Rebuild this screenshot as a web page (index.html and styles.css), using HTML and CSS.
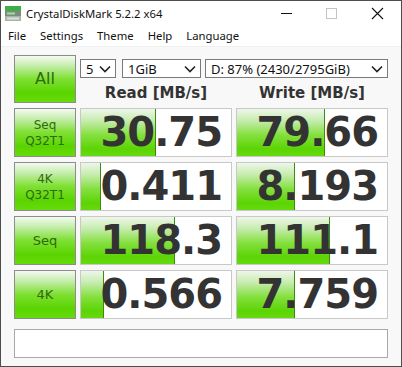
FILE: index.html
```html
<!DOCTYPE html>
<html>
<head>
    <meta charset="UTF-8">
    <title>CrystalDiskMark 5.2.2 x64</title>
    <link rel="stylesheet" href="styles.css">
</head>
<body>
    <div class="window">
        <div class="titlebar">
            <svg class="app-icon" width="16" height="15" viewBox="0 0 16 15">
                <rect x="0" y="0" width="16" height="5" fill="#3fae49"/>
                <rect x="0" y="5" width="16" height="5" fill="#7d8a80"/>
                <rect x="2" y="6.5" width="8" height="2" fill="#9fe0a0"/>
                <rect x="0" y="10" width="16" height="5" fill="#a9b3ab"/>
                <rect x="2" y="11.5" width="12" height="2" fill="#d8e6da"/>
            </svg>
            <span class="title">CrystalDiskMark 5.2.2 x64</span>
            <div class="controls">
                <svg width="46" height="24" viewBox="0 0 46 24"><line x1="18" y1="12.5" x2="29" y2="12.5" stroke="#111" stroke-width="1"/></svg>
                <svg width="46" height="24" viewBox="0 0 46 24"><rect x="17.5" y="7.5" width="10" height="10" fill="none" stroke="#c4c4c4" stroke-width="1"/></svg>
                <svg width="46" height="24" viewBox="0 0 46 24"><path d="M17 7 L28 18 M28 7 L17 18" stroke="#111" stroke-width="1.1"/></svg>
            </div>
        </div>
        <div class="menubar">
            <span>File</span>
            <span>Settings</span>
            <span>Theme</span>
            <span>Help</span>
            <span>Language</span>
        </div>

        <div class="client">
            <div class="bench">
                <div class="label-box all-button">All</div>
                <div class="top-right">
                    <div class="combo-row">
                        <div class="combo combo-count"><span>5</span><svg width="12" height="8" viewBox="0 0 12 8"><path d="M1 1.5 L6 6.5 L11 1.5" fill="none" stroke="#222" stroke-width="1.6"/></svg></div>
                        <div class="combo combo-size"><span>1GiB</span><svg width="12" height="8" viewBox="0 0 12 8"><path d="M1 1.5 L6 6.5 L11 1.5" fill="none" stroke="#222" stroke-width="1.6"/></svg></div>
                        <div class="combo combo-drive"><span>D: 87% (2430/2795GiB)</span><svg width="12" height="8" viewBox="0 0 12 8"><path d="M1 1.5 L6 6.5 L11 1.5" fill="none" stroke="#222" stroke-width="1.6"/></svg></div>
                    </div>
                    <div class="head-row">
                        <div class="col-head">Read [MB/s]</div>
                        <div class="col-head">Write [MB/s]</div>
                    </div>
                </div>

                <div class="label-box">Seq<br>Q32T1</div>
                <div class="value-box"><div class="bar" style="width: 74px"></div><span>30.75</span></div>
                <div class="value-box"><div class="bar" style="width: 87px"></div><span>79.66</span></div>

                <div class="label-box">4K<br>Q32T1</div>
                <div class="value-box"><div class="bar" style="width: 19px"></div><span>0.411</span></div>
                <div class="value-box"><div class="bar" style="width: 57px"></div><span>8.193</span></div>

                <div class="label-box label-single">Seq</div>
                <div class="value-box"><div class="bar" style="width: 93px"></div><span>118.3</span></div>
                <div class="value-box"><div class="bar" style="width: 92px"></div><span>111.1</span></div>

                <div class="label-box label-single">4K</div>
                <div class="value-box"><div class="bar" style="width: 22px"></div><span>0.566</span></div>
                <div class="value-box"><div class="bar" style="width: 57px"></div><span>7.759</span></div>
            </div>
            <div class="comment"></div>
        </div>
    </div>
</body>
</html>
```

FILE: styles.css
```css
body {
    margin: 0;
    font-family: "Noto Sans", "Open Sans", sans-serif;
    background-color: #fff;
    overflow: hidden;
}

.window {
    width: 402px;
    height: 367px;
    box-sizing: border-box;
    border: 1px solid #4d4d4d;
    background: #fff;
    display: flex;
    flex-direction: column;
}

.titlebar {
    height: 24px;
    display: flex;
    align-items: center;
    padding-left: 4px;
}

.app-icon {
    margin-top: 1px;
}

.title {
    margin-left: 5px;
    font-size: 11.3px;
    color: #111;
}

.controls {
    margin-left: auto;
    display: flex;
}

.menubar {
    height: 21px;
    display: flex;
    align-items: center;
    font-size: 11.3px;
    color: #111;
    padding-left: 7px;
    gap: 14px;
    border-bottom: 1px solid #f0f0f0;
}

.client {
    flex: 1;
    background: #f8f8f8;
    padding: 7px 0 0 13px;
}

.bench {
    display: grid;
    grid-template-columns: 62px 152px 152px;
    grid-auto-rows: 50px;
    column-gap: 4px;
    row-gap: 4px;
}

.label-box {
    box-sizing: border-box;
    border: 1px solid #8c8c8c;
    background: linear-gradient(to bottom, #f4faf0 0%, #c8eeb0 20%, #7ee032 50%, #5ad400 80%, #66dc0a 100%);
    color: #2f6a0c;
    font-family: "DejaVu Sans", Verdana, sans-serif;
    font-size: 12px;
    line-height: 16px;
    display: flex;
    align-items: center;
    justify-content: center;
    text-align: center;
    height: 49px;
}

.label-single {
    font-size: 13px;
}

.all-button {
    height: 48px;
    margin-top: 1px;
    font-size: 16px;
}

.top-right {
    grid-column: 2 / 4;
    display: flex;
    flex-direction: column;
}

.combo-row {
    display: flex;
    margin-top: 5px;
}

.combo {
    height: 19px;
    box-sizing: border-box;
    border: 1px solid #7a7a7a;
    background: #fff;
    display: flex;
    align-items: center;
    justify-content: space-between;
    padding: 0 4px 0 5px;
    font-size: 13px;
    color: #111;
}

.combo-count {
    width: 36px;
}

.combo-size {
    width: 79px;
    margin-left: 6px;
}

.combo-drive {
    width: 183px;
    margin-left: 4px;
}

.head-row {
    display: flex;
    gap: 4px;
    margin-top: 4px;
}

.col-head {
    width: 152px;
    text-align: center;
    font-family: "DejaVu Sans", Verdana, sans-serif;
    font-weight: bold;
    font-size: 15px;
    color: #333;
    line-height: 22px;
}

.value-box {
    position: relative;
    box-sizing: border-box;
    height: 49px;
    border: 1px solid #c8c8c8;
    background: #fff;
    overflow: hidden;
    display: flex;
    align-items: center;
    justify-content: flex-end;
    padding-right: 9px;
}

.bar {
    position: absolute;
    left: 0;
    top: 0;
    bottom: 0;
    background: linear-gradient(to bottom, #eef6ea 0%, #c6ecae 25%, #84e03e 55%, #5cd404 85%, #66da10 100%);
    border-right: 1px solid #3e8a10;
}

.value-box span {
    position: relative;
    font-family: "DejaVu Sans", Verdana, sans-serif;
    font-weight: bold;
    font-size: 40px;
    letter-spacing: -1px;
    color: #333;
    line-height: 49px;
}

.comment {
    width: 374px;
    height: 29px;
    box-sizing: border-box;
    margin-top: 9px;
    border: 1px solid #a8a8a8;
    background: #fff;
}
```
